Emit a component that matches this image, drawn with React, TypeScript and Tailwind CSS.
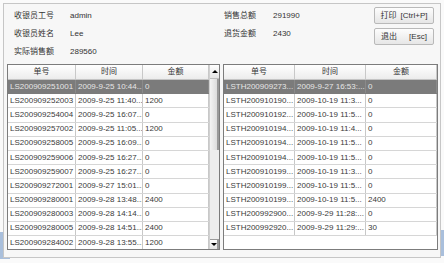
const font = { fontFamily: '"Liberation Sans", "Noto Sans CJK SC", sans-serif' };

const leftRows = [
  ['LS200909251001', '2009-9-25 10:44...', '0'],
  ['LS200909252003', '2009-9-25 11:40...', '1200'],
  ['LS200909254004', '2009-9-25 16:07...', '0'],
  ['LS200909257002', '2009-9-25 11:05...', '1200'],
  ['LS200909258005', '2009-9-25 16:09...', '0'],
  ['LS200909259006', '2009-9-25 16:27...', '0'],
  ['LS200909259007', '2009-9-25 16:27...', '0'],
  ['LS200909272001', '2009-9-27 15:01...', '0'],
  ['LS200909280001', '2009-9-28 13:48...', '2400'],
  ['LS200909280003', '2009-9-28 14:14...', '0'],
  ['LS200909280005', '2009-9-28 14:51...', '2400'],
  ['LS200909284002', '2009-9-28 13:55...', '1200'],
];

const rightRows = [
  ['LSTH200909273...', '2009-9-27 16:53:...', '0'],
  ['LSTH200910190...', '2009-10-19 11:3...', '0'],
  ['LSTH200910192...', '2009-10-19 11:5...', '0'],
  ['LSTH200910194...', '2009-10-19 11:4...', '0'],
  ['LSTH200910194...', '2009-10-19 11:5...', '0'],
  ['LSTH200910194...', '2009-10-19 11:5...', '0'],
  ['LSTH200910199...', '2009-10-19 11:3...', '0'],
  ['LSTH200910199...', '2009-10-19 11:5...', '0'],
  ['LSTH200910199...', '2009-10-19 11:5...', '2400'],
  ['LSTH200992900...', '2009-9-29 11:28:...', '0'],
  ['LSTH200992920...', '2009-9-29 11:29:...', '30'],
];

interface GridProps {
  rows: string[][];
  cols: string[];
  scroll?: boolean;
}

function Grid({ rows, cols, scroll }: GridProps) {
  return (
    <div className="flex h-full border border-[#7c7c7c] bg-white overflow-hidden">
      <div className="flex-1 flex flex-col overflow-hidden">
        <div className="flex h-[15px] shrink-0 bg-gradient-to-b from-white to-[#ececec] border-b border-[#c4c4c4]">
          {['单号', '时间', '金额'].map((h, i) => (
            <div
              key={h}
              className={`${cols[i]} shrink-0 flex items-center justify-center border-r border-[#c8c8c8] text-[8px] text-[#333]`}
            >
              {h}
            </div>
          ))}
        </div>
        {rows.map((r, i) => (
          <div
            key={i}
            className={`flex h-[14.2px] shrink-0 border-b ${
              i === 0 ? 'bg-[#7b7b7b] text-[#e6e6e6] border-[#7b7b7b]' : 'bg-white text-[#3a3a3a] border-[#d6d6d6]'
            }`}
          >
            {r.map((c, j) => (
              <div
                key={j}
                className={`${cols[j]} shrink-0 flex items-center pl-[2px] overflow-hidden whitespace-nowrap text-[8px] border-r ${
                  i === 0 ? 'border-[#8a8a8a]' : 'border-[#c8c8c8]'
                }`}
              >
                {c}
              </div>
            ))}
          </div>
        ))}
      </div>
      {scroll && (
        <div className="w-[10px] shrink-0 flex flex-col bg-[#eeeeee] border-l border-[#d0d0d0]">
          <div className="h-[14px] flex items-center justify-center bg-gradient-to-b from-white to-[#e4e4e4] border-b border-[#bdbdbd]">
            <div className="w-0 h-0 border-l-[3px] border-r-[3px] border-b-[3px] border-l-transparent border-r-transparent border-b-black" />
          </div>
          <div className="h-[71px] bg-gradient-to-r from-[#f4f4f4] to-[#dcdcdc] border-r-2 border-[#9a9a9a]" />
          <div className="flex-1" />
          <div className="h-[10px] flex items-center justify-center bg-gradient-to-b from-white to-[#e4e4e4] border-t border-r-2 border-[#9a9a9a]">
            <div className="w-0 h-0 border-l-[3px] border-r-[3px] border-t-[3px] border-l-transparent border-r-transparent border-t-black" />
          </div>
        </div>
      )}
    </div>
  );
}

function Info({ label, value, w }: { label: string; value: string; w: string }) {
  return (
    <div className="flex h-[18px] items-center text-[8px] text-[#333]">
      <span className={w}>{label}</span>
      <span>{value}</span>
    </div>
  );
}

export default function App() {
  return (
    <div className="relative w-[444px] h-[263px] bg-[#fafafa] overflow-hidden" style={font}>
      <div className="absolute left-0 top-[232px] w-[10px] h-[27px] bg-[#a9bfdc]" />
      <div className="absolute right-0 top-[230px] w-[10px] h-[26px] bg-[#a9bfdc]" />
      <div className="absolute left-[3px] top-[3px] w-[438px] h-[255px] border border-[#c6c6c6] bg-[#f7f7f7] flex flex-col">
        <div className="flex h-[60px] shrink-0">
          <div className="pl-[10px] pt-[3px] w-[220px]">
            <Info label="收银员工号" value="admin" w="w-[56px]" />
            <Info label="收银员姓名" value="Lee" w="w-[56px]" />
            <Info label="实际销售额" value="289560" w="w-[56px]" />
          </div>
          <div className="pt-[3px] w-[150px]">
            <Info label="销售总额" value="291990" w="w-[49px]" />
            <Info label="退货金额" value="2430" w="w-[49px]" />
          </div>
          <div className="flex flex-col gap-[4px] pt-[3px]">
            <button className="w-[60px] h-[17px] flex items-center justify-center gap-[4px] rounded-[2px] border border-[#b9b9b9] bg-gradient-to-b from-[#fdfdfd] to-[#e6e6e6] text-[8px] text-[#333]">
              <span>打印</span>
              <span>[Ctrl+P]</span>
            </button>
            <button className="w-[60px] h-[17px] flex items-center justify-center gap-[12px] rounded-[2px] border border-[#b9b9b9] bg-gradient-to-b from-[#fdfdfd] to-[#e6e6e6] text-[8px] text-[#333]">
              <span>退出</span>
              <span>[Esc]</span>
            </button>
          </div>
        </div>
        <div className="flex gap-[3px] pl-[3px] h-[186px]">
          <div className="w-[213px] h-full">
            <Grid rows={leftRows} cols={['w-[68px]', 'w-[67px]', 'w-[66px]']} scroll />
          </div>
          <div className="w-[215px] h-full">
            <Grid rows={rightRows} cols={['w-[71px]', 'w-[71px]', 'w-[71px]']} />
          </div>
        </div>
      </div>
    </div>
  );
}
